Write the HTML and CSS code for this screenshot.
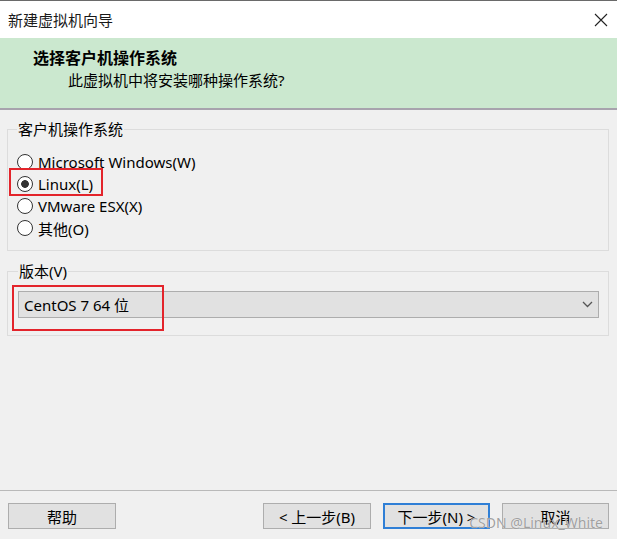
FILE: index.html
```html
<!DOCTYPE html>
<html lang="zh-CN">
<head>
    <meta charset="UTF-8">
    <meta name="viewport" content="width=device-width, initial-scale=1.0">
    <title>新建虚拟机向导</title>
    <link rel="stylesheet" href="styles.css">
</head>
<body>
    <div class="window">
        <div class="titlebar">
            <span class="title">新建虚拟机向导</span>
            <svg class="close" width="14" height="14" viewBox="0 0 14 14">
                <path d="M1 1 L13 13 M13 1 L1 13" stroke="#222" stroke-width="1.1" fill="none"/>
            </svg>
        </div>
        <div class="banner">
            <h1>选择客户机操作系统</h1>
            <p>此虚拟机中将安装哪种操作系统?</p>
        </div>
        <main class="content">
            <fieldset class="group group-os">
                <legend>客户机操作系统</legend>
                <label class="option"><input type="radio" name="os">Microsoft Windows(W)</label>
                <label class="option marked"><input type="radio" name="os" checked>Linux(L)</label>
                <label class="option"><input type="radio" name="os">VMware ESX(X)</label>
                <label class="option"><input type="radio" name="os">其他(O)</label>
            </fieldset>
            <fieldset class="group group-version">
                <legend>版本(V)</legend>
                <div class="select marked-select">
                    <span>CentOS 7 64 位</span>
                    <svg class="chevron" width="11" height="7" viewBox="0 0 11 7">
                        <path d="M1 1 L5.5 5.5 L10 1" stroke="#555" stroke-width="1.3" fill="none"/>
                    </svg>
                </div>
            </fieldset>
        </main>
        <footer class="buttons">
            <button class="btn">帮助</button>
            <div class="nav">
                <button class="btn">&lt; 上一步(B)</button>
                <button class="btn btn-focus">下一步(N) &gt;</button>
                <button class="btn">取消</button>
            </div>
            <span class="watermark">CSDN @Linux_White</span>
        </footer>
    </div>
</body>
</html>
```

FILE: styles.css
```css
* {
    box-sizing: border-box;
}
body {
    margin: 0;
    font-family: "Noto Sans", "Noto Sans CJK SC", sans-serif;
    font-size: 15px;
    color: #000;
    background-color: #f0f0f0;
}
.window {
    width: 617px;
    height: 539px;
    display: flex;
    flex-direction: column;
}
.titlebar {
    height: 38px;
    border-top: 1px solid #6a6a6a;
    background-color: #ffffff;
    display: flex;
    align-items: center;
    justify-content: space-between;
    padding: 0 9px 0 8px;
}
.title {
    line-height: 20px;
    color: #1a1a1a;
}
.banner {
    height: 72px;
    background-color: #cbe8cf;
    border-bottom: 2px solid #a7a3ad;
    padding: 10px 0 0 33px;
}
.banner h1 {
    margin: 0;
    font-size: 16px;
    font-weight: bold;
    line-height: 20px;
}
.banner p {
    margin: 2px 0 0 35px;
    line-height: 20px;
}
.content {
    flex: 1;
}
.group {
    margin: 9px 8px 0 7px;
    border: 1px solid #dcdcdc;
    padding: 12px 10px 11px 9px;
}
.group legend {
    padding: 0 1px;
    line-height: 20px;
}
.group-version {
    margin-top: 10px;
    padding: 10px 9px 17px 10px;
}
.option {
    display: flex;
    align-items: center;
    gap: 5px;
    height: 22px;
    width: max-content;
}
.option input {
    appearance: none;
    width: 16px;
    height: 16px;
    margin: 0;
    border: 1px solid #333;
    border-radius: 50%;
    background-color: #fff;
}
.option input:checked {
    background: radial-gradient(circle, #333 0 3.5px, #fff 4.2px);
}
.marked {
    position: relative;
}
.marked::after {
    content: "";
    position: absolute;
    top: -5px;
    bottom: -1px;
    left: -8px;
    right: -10px;
    border: 2px solid #e3242b;
}
.select {
    position: relative;
    height: 27px;
    border: 1px solid #adadad;
    background-color: #e1e1e1;
    display: flex;
    align-items: center;
    justify-content: space-between;
    padding: 0 5px 0 5px;
    line-height: 20px;
}
.marked-select::after {
    content: "";
    position: absolute;
    top: -7px;
    left: -7px;
    width: 148px;
    height: 42px;
    border: 2px solid #e3242b;
}
.buttons {
    position: relative;
    height: 49px;
    border-top: 1px solid #b9b9b9;
    padding: 12px 8px 0 8px;
    display: flex;
    justify-content: space-between;
    align-items: flex-start;
}
.nav {
    display: flex;
    gap: 12px;
}
.btn {
    width: 107px;
    height: 26px;
    padding: 0;
    font-family: inherit;
    font-size: 15px;
    color: #000;
    background-color: #e1e1e1;
    border: 1px solid #adadad;
}
.btn:first-child {
    width: 108px;
}
.btn-focus {
    border: 2px solid #2f7fd6;
}
.watermark {
    position: absolute;
    right: 14px;
    top: 22px;
    font-size: 14px;
    line-height: 20px;
    color: #a0a0a0;
    text-shadow: 0 0 1px #fff;
    pointer-events: none;
}
```
